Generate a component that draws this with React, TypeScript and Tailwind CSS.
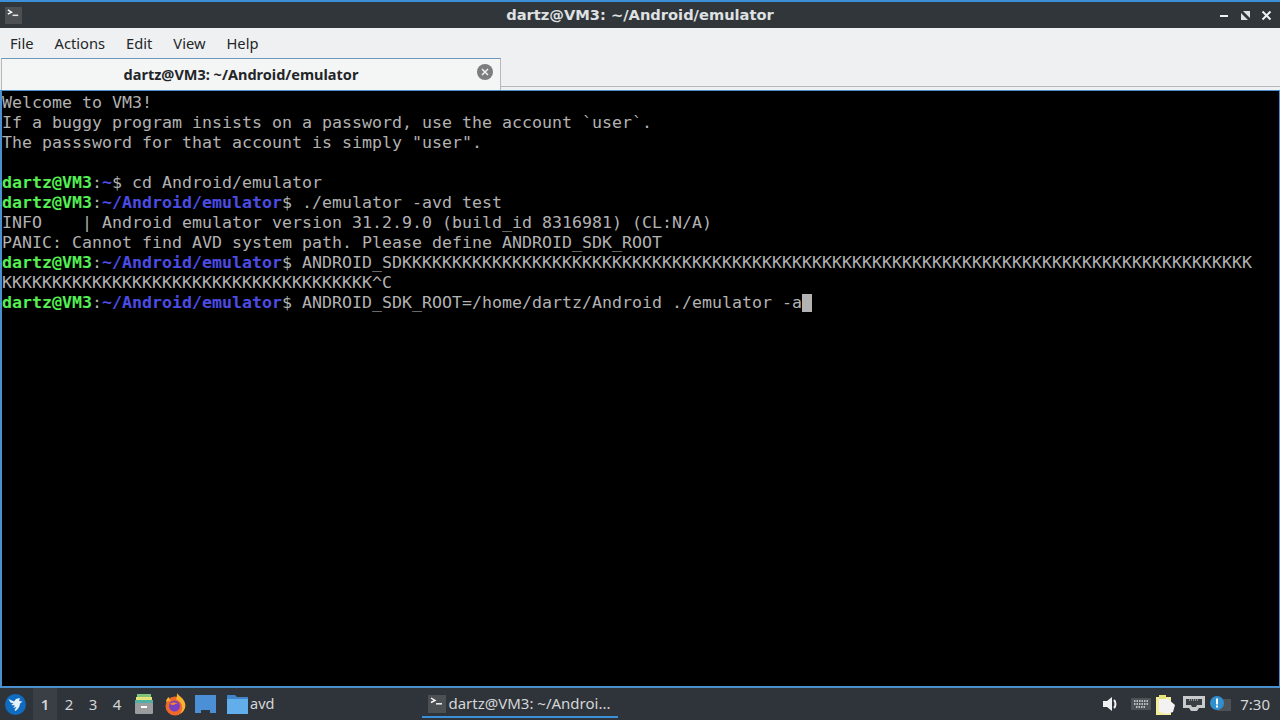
const ui = { fontFamily: '"Noto Sans", "Open Sans", sans-serif' }

function Prompt({ path }: { path: string }) {
  return (
    <>
      <span className="font-bold text-[#54f054]">dartz@VM3</span>
      <span>:</span>
      <span className="font-bold text-[#4c4ce4]">{path}</span>
      <span>$ </span>
    </>
  )
}

function TerminalIcon({ size = 18 }: { size?: number }) {
  return (
    <svg width={size} height={size} viewBox="0 0 18 18">
      <rect width="18" height="18" fill="#4d5053" />
      <path d="M3 3l4 2.5L3 7.5" fill="none" stroke="#fff" strokeWidth="1.4" />
      <rect x="8" y="8" width="6" height="1.6" fill="#e8e8e8" />
    </svg>
  )
}

function Lines() {
  const ks = 'K'.repeat(84)
  const ks2 = 'K'.repeat(37)
  return (
    <pre className="m-0 pt-[2px] text-[16.61px] leading-[20px] text-[#b2b2b2]" style={{ fontFamily: '"DejaVu Sans Mono", monospace' }}>
      {'Welcome to VM3!\nIf a buggy program insists on a password, use the account `user`.\nThe passsword for that account is simply "user".\n\n'}
      <Prompt path="~" />{'cd Android/emulator\n'}
      <Prompt path="~/Android/emulator" />{'./emulator -avd test\n'}
      {'INFO    | Android emulator version 31.2.9.0 (build_id 8316981) (CL:N/A)\nPANIC: Cannot find AVD system path. Please define ANDROID_SDK_ROOT\n'}
      <Prompt path="~/Android/emulator" />{'ANDROID_SDK' + ks + '\n'}
      {ks2 + '^C\n'}
      <Prompt path="~/Android/emulator" />{'ANDROID_SDK_ROOT=/home/dartz/Android ./emulator -a'}
      <span className="mt-[1px] inline-block h-[18px] w-[10px] bg-[#b2b2b2] align-top" />
    </pre>
  )
}

export default function App() {
  return (
    <div className="flex h-[720px] w-[1280px] flex-col overflow-hidden bg-[#31363b]" style={ui}>
      <div className="h-[2px] bg-[#3d8fd8]" />
      <div className="relative flex h-[26px] items-center justify-between bg-[#31363b] pl-[5px] pr-[7px]">
        <TerminalIcon size={17} />
        <span className="absolute inset-x-0 text-center text-[14.65px] font-bold text-[#dfe1e3]" style={{ fontFamily: '"DejaVu Sans", sans-serif' }}>dartz@VM3: ~/Android/emulator</span>
        <div className="flex items-center gap-[8px]">
          <svg width="13" height="13" viewBox="0 0 13 13"><rect x="2" y="6" width="8" height="2" fill="#eff0f1" /></svg>
          <svg width="13" height="13" viewBox="0 0 13 13"><path d="M2 4v7h7zM4 2h7v7z" fill="#dfe1e3" /></svg>
          <svg width="13" height="13" viewBox="0 0 13 13"><path d="M2.5 2.5l8 8M10.5 2.5l-8 8" stroke="#eff0f1" strokeWidth="2" /></svg>
        </div>
      </div>
      <div className="flex h-[30px] items-center gap-[21px] bg-[#eff0f1] pl-[10px] text-[14.7px] text-[#232629]">
        <span>File</span><span>Actions</span><span>Edit</span><span>View</span><span>Help</span>
      </div>
      <div className="flex h-[32px] bg-[#eff0f1]">
        <div className="relative ml-[1px] flex h-[32px] w-[500px] items-center justify-center border-x border-t border-[#b6b8ba] border-t-[#6e97bd] bg-[#f4f5f5] text-[14.5px] font-bold text-[#232629]">
          <span className="pr-[20px]">dartz@VM3: ~/Android/emulator</span>
          <svg className="absolute right-[7px] top-[5px]" width="16" height="16" viewBox="0 0 16 16">
            <circle cx="8" cy="8" r="8" fill="#7b7d7f" />
            <path d="M5 5l6 6M11 5l-6 6" stroke="#eee" strokeWidth="1.6" />
          </svg>
        </div>
        <div className="h-[29px] flex-1 border-b border-[#b6b8ba]" />
      </div>
      <div className="h-[598px] border border-b-2 border-l-2 border-[#4b8fce] bg-black">
        <Lines />
      </div>
      <div className="flex h-[32px] items-center bg-[#2f343a] text-[15px] text-[#d4d6d8]">
        <svg className="ml-[5px]" width="21" height="21" viewBox="0 0 21 21">
          <circle cx="10.5" cy="10.5" r="10.5" fill="#0f6cc0" />
          <path d="M3.5 5l5.5 2.5L11 5l4-1-1 3 3.5.5-2.5 2c0 3-2 6-4.5 7.5l-1-1 2-3-3.5 1 2-2.5-4-.5 2.5-1.5-3-1z" fill="#e8f2fb" />
        </svg>
        <div className="ml-[7px] flex">
          <span className="flex h-[32px] w-[24px] items-center justify-center bg-[#393f45] font-semibold">1</span>
          <span className="flex h-[32px] w-[24px] items-center justify-center">2</span>
          <span className="flex h-[32px] w-[24px] items-center justify-center">3</span>
          <span className="flex h-[32px] w-[24px] items-center justify-center">4</span>
        </div>
        <svg className="ml-[5px]" width="20" height="22" viewBox="0 0 20 22">
          <path d="M3 1h14v4H3z" fill="#7fc47a" />
          <path d="M2 4h16v4H2z" fill="#e8e27c" />
          <path d="M1 7h18v4H1z" fill="#4fb2a0" />
          <rect x="1" y="10" width="18" height="11" rx="1" fill="#9a9c9e" />
          <rect x="7" y="13" width="6" height="2" fill="#fff" />
        </svg>
        <svg className="ml-[10px]" width="22" height="23" viewBox="0 0 22 23">
          <circle cx="11" cy="13" r="9.5" fill="#f0692b" />
          <path d="M13 0c1 2 3 3 5 5 3 3 4 7 3 10-1 3-3 5-5 6 3-4 3-9 0-12-1-1-3-2-4-3 1-2 1-4 1-6z" fill="#fbb32f" />
          <path d="M2 9c0-2 1-4 3-5 0 2 1 3 2 4-2 0-4 0-5 1z" fill="#fbb32f" />
          <circle cx="10.5" cy="13" r="5.5" fill="#7a3fc0" />
          <path d="M6 11c2-2 6-2 8 0-2-.5-3 0-4 1-2 0-3-.5-4-1z" fill="#f08a2b" />
        </svg>
        <svg className="ml-[9px]" width="21" height="19" viewBox="0 0 21 19">
          <path d="M0 0h21v18h-6v-3H6v3H0z" fill="#4b8fd6" />
        </svg>
        <svg className="ml-[11px]" width="21" height="20" viewBox="0 0 21 20">
          <path d="M0 1h8l2 2h11v17H0z" fill="#3f85c8" />
          <rect y="5" width="21" height="15" fill="#62aeea" />
        </svg>
        <span className="ml-[2px] text-[14.5px]">avd</span>
        <div className="ml-[148px] flex h-[30px] w-[196px] items-center gap-[2px] self-start border-b-[2px] border-[#3d8fd8] pl-[6px] pt-[3px]">
          <TerminalIcon size={18} />
          <span>dartz@VM3: ~/Androi...</span>
        </div>
        <div className="ml-auto flex items-center pr-[10px]">
          <svg width="18" height="18" viewBox="0 0 18 18">
            <path d="M1 6h4l5-4v14l-5-4H1z" fill="#eff0f1" />
            <path d="M12 5c2 2 2 6 0 8" fill="none" stroke="#eff0f1" strokeWidth="2" />
          </svg>
          <svg className="ml-[11px]" width="20" height="12" viewBox="0 0 20 12">
            <rect width="20" height="12" fill="#4d5257" />
            <path d="M3 3h14M3 6h14M5 9h10" stroke="#dfe1e3" strokeWidth="1.4" strokeDasharray="1.5 1" />
          </svg>
          <svg className="ml-[5px]" width="21" height="21" viewBox="0 0 21 21">
            <rect x="0" y="3" width="15" height="18" fill="#f4ee9a" />
            <rect x="3" y="1" width="7" height="4" fill="#e8e27c" />
            <path d="M3 5h9l7 6-2 7-6 2-8-2z" fill="#f2f2f2" />
          </svg>
          <svg className="ml-[6px]" width="22" height="17" viewBox="0 0 22 17">
            <path d="M0 0h22v12h-6l-2 3H8l-2-3H0z" fill="#c8cacc" />
            <path d="M3 3h16v6h-5l-1 2H9l-1-2H3z" fill="#3a3f44" />
            <path d="M6 4h10" stroke="#dfe1e3" strokeWidth="1.2" strokeDasharray="1 1" />
          </svg>
          <svg className="ml-[5px]" width="21" height="18" viewBox="0 0 21 18">
            <rect x="7" y="4" width="14" height="12" fill="#4d5257" />
            <circle cx="7" cy="8" r="7" fill="#2f8fcf" />
            <rect x="6" y="3.5" width="2" height="6" fill="#fff" />
            <rect x="6" y="10.5" width="2" height="2" fill="#fff" />
          </svg>
          <span className="ml-[9px]">7:30</span>
        </div>
      </div>
    </div>
  )
}
